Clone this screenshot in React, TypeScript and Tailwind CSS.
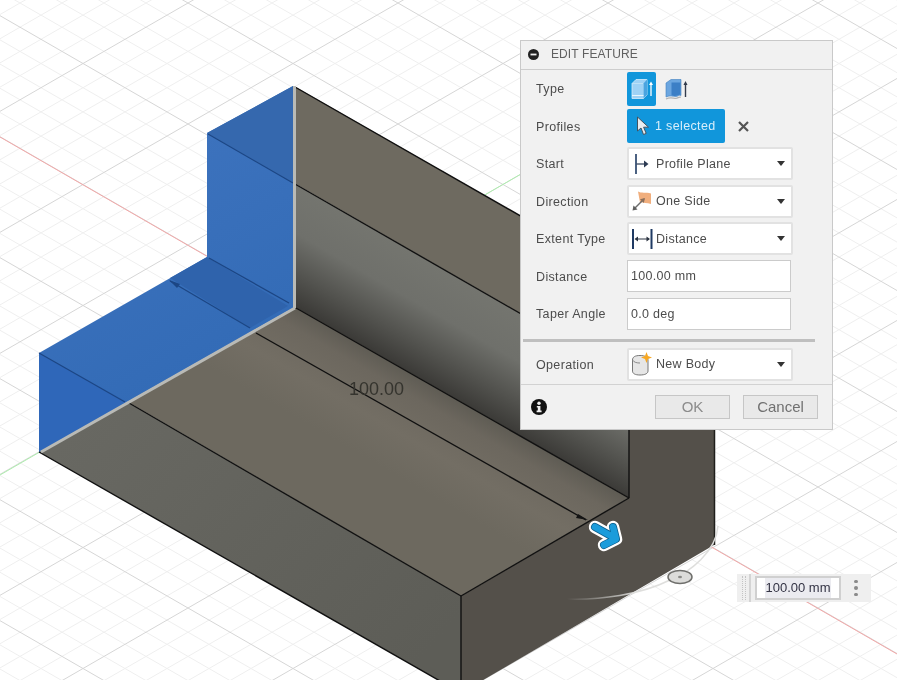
import React from 'react';

const FONT = { fontFamily: '"Liberation Sans", Arial, sans-serif' };

// isometric floor grid, origin sits at the inner corner of the body
const ORIGIN = { x: 293, y: 305.5 };
const STEP_A = { x: 21, y: 12.1 };
const STEP_B = { x: 21, y: -12.1 };

const gridPath = (major: boolean) => {
  let d = '';
  for (let i = -60; i <= 60; i++) {
    if ((i % 5 === 0) !== major) continue;
    const ax = ORIGIN.x + STEP_B.x * i;
    const ay = ORIGIN.y + STEP_B.y * i;
    d += `M${ax - STEP_A.x * 60} ${ay - STEP_A.y * 60}L${ax + STEP_A.x * 60} ${ay + STEP_A.y * 60}`;
    const bx = ORIGIN.x + STEP_A.x * i;
    const by = ORIGIN.y + STEP_A.y * i;
    d += `M${bx - STEP_B.x * 60} ${by - STEP_B.y * 60}L${bx + STEP_B.x * 60} ${by + STEP_B.y * 60}`;
  }
  return d;
};

const Scene = () => (
  <svg className="absolute inset-0" width="897" height="680" viewBox="0 0 897 680">
    <defs>
      <linearGradient id="wall" gradientUnits="userSpaceOnUse" x1="400" y1="244" x2="347" y2="336">
        <stop offset="0" stopColor="#74756f" />
        <stop offset="0.4" stopColor="#6f706b" />
        <stop offset="0.75" stopColor="#51514d" />
        <stop offset="1" stopColor="#3b3a37" />
      </linearGradient>
      <linearGradient id="floor" gradientUnits="userSpaceOnUse" x1="400" y1="367" x2="352" y2="450">
        <stop offset="0" stopColor="#5f5c54" />
        <stop offset="0.2" stopColor="#6c675e" />
        <stop offset="0.6" stopColor="#736e64" />
        <stop offset="1" stopColor="#6d695f" />
      </linearGradient>
      <linearGradient id="front" gradientUnits="userSpaceOnUse" x1="100" y1="400" x2="400" y2="680">
        <stop offset="0" stopColor="#686862" />
        <stop offset="1" stopColor="#5d5d57" />
      </linearGradient>
      <linearGradient id="blue" gradientUnits="userSpaceOnUse" x1="120" y1="180" x2="250" y2="420">
        <stop offset="0" stopColor="#3c72bd" />
        <stop offset="1" stopColor="#3069b4" />
      </linearGradient>
      <linearGradient id="arc" gradientUnits="userSpaceOnUse" x1="567" y1="599" x2="640" y2="592">
        <stop offset="0" stopColor="#d8d8d6" stopOpacity="0" />
        <stop offset="1" stopColor="#dededc" />
      </linearGradient>
    </defs>

    <path d={gridPath(false)} stroke="#efefef" strokeWidth="1" fill="none" />
    <path d={gridPath(true)} stroke="#d6d6d6" strokeWidth="1" fill="none" />
    <line x1="0" y1="137" x2="897" y2="654" stroke="#f2a8a8" strokeWidth="1" />
    <line x1="0" y1="475" x2="540" y2="163" stroke="#aeeeae" strokeWidth="1" />

    {/* body faces */}
    <polygon points="629,278 714,229 714,545 461,693 461,596 629,498" fill="#54504a" />
    <polygon points="294,86 294,183 629,376 629,278" fill="#6e6a60" />
    <polygon points="294,183 294,307 629,498 629,376" fill="url(#wall)" />
    <polygon points="128,402 295,307 629,498 461,596" fill="url(#floor)" />
    <polygon points="39,452 128,402 461,596 461,693" fill="url(#front)" />

    {/* selected profile */}
    <polygon points="293,86 207,133 207,257 39,353 39,452 295,307" fill="url(#blue)" />
    <polygon points="293,86 207,133 293,183" fill="#3568ae" />
    <polygon points="39,353 39,452 127,402" fill="#2f67b9" />
    <polygon points="207,257 170,278 250,328 288,306" fill="#2f63ac" />

    {/* edges */}
    <g stroke="#101010" strokeWidth="1.4" fill="none">
      <line x1="295" y1="87" x2="629" y2="278" />
      <line x1="295" y1="184" x2="629" y2="376" />
      <line x1="296" y1="308" x2="629" y2="498" />
      <line x1="129" y1="403" x2="461" y2="596" />
      <line x1="39" y1="452" x2="440" y2="681" />
      <line x1="461" y1="596" x2="629" y2="498" />
      <line x1="461" y1="596" x2="461" y2="680" />
      <line x1="629" y1="430" x2="629" y2="498" />
      <line x1="256" y1="333" x2="586" y2="520" />
    </g>
    <line x1="714.5" y1="430" x2="714.5" y2="545" stroke="#1f1e1b" strokeWidth="1.5" />
    <polygon points="578,514 588,520 576,518" fill="#141414" />
    <g stroke="#1c4684" strokeWidth="1.2" fill="none">
      <line x1="208" y1="134" x2="293" y2="183" />
      <line x1="39" y1="353" x2="125" y2="402" />
      <line x1="209" y1="258" x2="289" y2="303" />
      <line x1="170" y1="281" x2="250" y2="328" />
    </g>
    <polygon points="169,280 180,284 177,288" fill="#1c4684" />
    <g stroke="#b9bab6" strokeWidth="3" fill="none">
      <line x1="294.5" y1="86" x2="294.5" y2="308" />
      <line x1="41" y1="452" x2="295" y2="308" />
    </g>

    <text x="349" y="395" fontSize="18" fill="#35342e" style={FONT}>
      100.00
    </text>

    {/* distance manipulator */}
    <path d="M567 599C600 600 640 595 670 580C690 572 716 552 718 526" stroke="url(#arc)" strokeWidth="1.5" fill="none" />
    <ellipse cx="680" cy="577" rx="12" ry="6.5" fill="#dcdcda" stroke="#6f6f6c" strokeWidth="1.5" />
    <ellipse cx="680" cy="577" rx="2" ry="1.2" fill="#8a8a88" />
    <g fill="none" strokeLinecap="round" strokeLinejoin="round">
      <path d="M595 527L613 537M613 527L616 539L604 545" stroke="#ffffff" strokeWidth="12.5" />
      <path d="M595 527L613 537M613 527L616 539L604 545" stroke="#0d5f8d" strokeWidth="8" />
      <path d="M595 527L613 537M613 527L616 539L604 545" stroke="#1b9cdb" strokeWidth="6.5" />
    </g>
  </svg>
);

const Caret = () => (
  <svg className="absolute right-[6px] top-[12px]" width="8" height="5" viewBox="0 0 8 5">
    <path d="M0 0h8L4 5z" fill="#333333" />
  </svg>
);

const ExtrudeIcon = () => (
  <svg width="24" height="24" viewBox="0 0 24 24">
    <path d="M2 6.5L6 2.5H17V18L13.5 21.5H2z" fill="#9fd2f5" stroke="#d8eefb" strokeWidth="0.8" />
    <path d="M2 6.5H13.5V21.5" fill="none" stroke="#c5e5f8" strokeWidth="0.8" />
    <path d="M13.5 6.5L17 2.5V18L13.5 21.5z" fill="#4aa4e0" />
    <path d="M2 18.5H13.5" stroke="#e9f6fd" strokeWidth="1" />
    <path d="M21 6V19" stroke="#ffffff" strokeWidth="1.3" />
    <path d="M19 8L21 4.5L23 8z" fill="#ffffff" />
  </svg>
);

const ThinIcon = () => (
  <svg width="24" height="24" viewBox="0 0 24 24">
    <path d="M1 6L6 2.5H16V18.5C14 17.5 13 19.5 11 19.5C8 19.5 5 18 1 20z" fill="#6ba6e0" stroke="#3f7fc0" strokeWidth="0.6" />
    <path d="M6.5 5.5H15.5V18C13.5 17 12 19 10 19C9 19 7.5 18.6 6.5 18.3z" fill="#3c7fc6" />
    <path d="M1 22C5 19.8 8 21.3 11 21.3C13 21.3 14 19.3 16 20.3" stroke="#b3b3b3" strokeWidth="1.2" fill="none" />
    <path d="M20.5 6V20" stroke="#333c4c" strokeWidth="1.4" />
    <path d="M18.5 8L20.5 4L22.5 8z" fill="#333c4c" />
  </svg>
);

const CursorIcon = () => (
  <svg width="14" height="20" viewBox="0 0 14 20">
    <path d="M1.5 1V15L5 12L7.5 18.5L10.2 17.4L7.6 11.2H12.5z" fill="#e9edf0" stroke="#46535f" strokeWidth="1" strokeLinejoin="round" />
  </svg>
);

const ProfilePlaneIcon = () => (
  <svg width="16" height="22" viewBox="0 0 16 22">
    <path d="M1 1V21" stroke="#1f3a63" strokeWidth="1.6" />
    <path d="M1.5 11H10" stroke="#2b3a52" strokeWidth="1.2" />
    <path d="M9 7.5L13.5 11L9 14.5z" fill="#2b3a52" />
  </svg>
);

const DirectionIcon = () => (
  <svg width="22" height="22" viewBox="0 0 22 22">
    <path d="M6 1.5C9 3.5 14 2 19 3.5V14C15 12.5 11 13.5 8 12.5z" fill="#f0ae7d" />
    <path d="M1.5 19.5L12 9" stroke="#6d6d6d" strokeWidth="1.5" />
    <path d="M0.5 20.5L1.5 15.5L5.5 19.5z" fill="#5f5f5f" />
    <path d="M13 8L8 9.2L11.8 13z" fill="#8a6e5a" />
  </svg>
);

const DistanceIcon = () => (
  <svg width="22" height="22" viewBox="0 0 22 22">
    <path d="M1 1V21M19.5 1V21" stroke="#1f3a63" strokeWidth="2" />
    <path d="M4 11H17" stroke="#2b3340" strokeWidth="1" />
    <path d="M2.5 11L6 8.5V13.5zM18 11L14.5 8.5V13.5z" fill="#2b3340" />
  </svg>
);

const NewBodyIcon = () => (
  <svg width="22" height="24" viewBox="0 0 22 24">
    <path d="M0.5 8C0.5 5 3 3.5 8 3.5C13 3.5 16 5 16 8V19C16 21.5 13 23 8 23C3 23 0.5 21.5 0.5 19z" fill="#e6e6e6" stroke="#777777" strokeWidth="1" />
    <path d="M0.5 8C2 10.5 5 11 8 11" fill="none" stroke="#8a8a8a" strokeWidth="1" />
    <path d="M14.5 0L16 4L20 5.5L16 7L14.5 11L13 7L9 5.5L13 4z" fill="#f7a823" />
  </svg>
);

const Row: React.FC<{ label: string; children: React.ReactNode }> = ({ label, children }) => (
  <div className="flex h-[37.5px] items-center pl-[15px]">
    <span className="w-[91px] shrink-0 pt-[2px] text-[12.5px] tracking-[0.35px] text-[#4c4c4c]">{label}</span>
    {children}
  </div>
);

const Select: React.FC<{ icon: React.ReactNode; value: string }> = ({ icon, value }) => (
  <div className="relative flex h-[33px] w-[166px] items-center rounded-[2px] border-2 border-[#e2e2e2] bg-white">
    <span className="flex w-[27px] shrink-0 justify-center">{icon}</span>
    <span className="pt-[1px] text-[12.5px] tracking-[0.3px] text-[#4c4c4c]">{value}</span>
    <Caret />
  </div>
);

const TextInput: React.FC<{ value: string }> = ({ value }) => (
  <div className="flex h-[32px] w-[164px] items-center border border-[#cbcbcb] bg-white pl-[3px] pt-[1px] text-[12.5px] tracking-[0.3px] text-[#4c4c4c]">
    {value}
  </div>
);

const FeaturePanel = () => (
  <div className="absolute left-[520px] top-[40px] flex h-[390px] w-[313px] flex-col border border-[#c9c9c9] bg-[#f1f1f1]">
    <div className="flex h-[29px] shrink-0 items-center gap-[7px] border-b border-[#cdcdcd] pb-[2px] pl-[7px]">
      <svg width="11" height="11" viewBox="0 0 11 11">
        <circle cx="5.5" cy="5.5" r="5.5" fill="#222222" />
        <rect x="2.5" y="4.6" width="6" height="1.8" fill="#f1f1f1" />
      </svg>
      <span className="pl-[5px] text-[12px] tracking-[0.1px] text-[#606060]">EDIT FEATURE</span>
    </div>

    <Row label="Type">
      <div className="flex h-[34px] w-[29px] items-center justify-center rounded-[2px] bg-[#1196db]">
        <ExtrudeIcon />
      </div>
      <span className="ml-[9px]">
        <ThinIcon />
      </span>
    </Row>
    <Row label="Profiles">
      <div className="flex h-[34px] w-[98px] items-center gap-[5px] rounded-[2px] bg-[#1196db] pl-[9px] text-[12.5px] tracking-[0.35px] text-[#d8eefa]">
        <CursorIcon />
        <span className="pt-[1px]">1 selected</span>
      </div>
      <svg className="ml-[13px]" width="11" height="11" viewBox="0 0 11 11">
        <path d="M1 1L10 10M10 1L1 10" stroke="#555555" strokeWidth="2.2" />
      </svg>
    </Row>
    <Row label="Start">
      <Select icon={<ProfilePlaneIcon />} value="Profile Plane" />
    </Row>
    <Row label="Direction">
      <Select icon={<DirectionIcon />} value="One Side" />
    </Row>
    <Row label="Extent Type">
      <Select icon={<DistanceIcon />} value="Distance" />
    </Row>
    <Row label="Distance">
      <TextInput value="100.00 mm" />
    </Row>
    <Row label="Taper Angle">
      <TextInput value="0.0 deg" />
    </Row>

    <div className="ml-[2px] mt-[6px] h-[3px] w-[292px] shrink-0 bg-[#bfbfbf]" />

    <div className="mt-[4px]">
      <Row label="Operation">
        <Select icon={<NewBodyIcon />} value="New Body" />
      </Row>
    </div>

    <div className="mt-[1px] flex flex-1 items-center border-t border-[#d2d2d2] pl-[10px] pr-[14px]">
      <svg width="16" height="16" viewBox="0 0 16 16">
        <circle cx="8" cy="8" r="8" fill="#111111" />
        <circle cx="8" cy="4.2" r="1.7" fill="#f1f1f1" />
        <path d="M5.8 7h3.6v4.6h1.2v1.7H5.6v-1.7h1.2V8.6h-1z" fill="#f1f1f1" />
      </svg>
      <button className="ml-auto h-[24px] w-[75px] border border-[#c6c6c6] bg-[#e9e9e9] text-[15px] text-[#8c8c8c]">OK</button>
      <button className="ml-[13px] h-[24px] w-[75px] border border-[#c6c6c6] bg-[#e9e9e9] text-[15px] text-[#707070]">Cancel</button>
    </div>
  </div>
);

const ValueInput = () => (
  <div className="absolute left-[737px] top-[574px] flex h-[28px] w-[134px] items-center bg-[#efefef]">
    <div className="h-full w-[14px] border-r-2 border-[#d4d4d4] pl-[5px]">
      <div className="mt-[2px] h-[24px] w-[4px] border-x border-dotted border-[#c4c4c4]" />
    </div>
    <div className="ml-[4px] flex h-[24px] w-[86px] items-center justify-center border-2 border-[#d0d0d0] bg-white">
      <span className="bg-[#ebebf0] text-[13px] text-[#333344]">100.00 mm</span>
    </div>
    <div className="ml-[13px] flex flex-col gap-[3px]">
      <span className="h-[3.5px] w-[3.5px] rounded-full bg-[#8a8a8a]" />
      <span className="h-[3.5px] w-[3.5px] rounded-full bg-[#8a8a8a]" />
      <span className="h-[3.5px] w-[3.5px] rounded-full bg-[#8a8a8a]" />
    </div>
  </div>
);

export default function App() {
  return (
    <div className="relative h-[680px] w-[897px] overflow-hidden bg-white blur-[0.4px]" style={FONT}>
      <Scene />
      <FeaturePanel />
      <ValueInput />
    </div>
  );
}
